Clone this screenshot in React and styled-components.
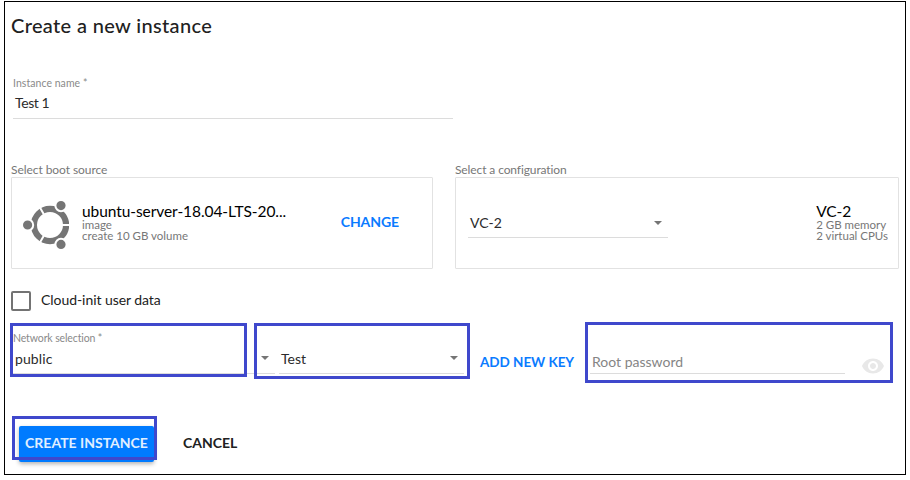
import React from "react";
import styled, { createGlobalStyle } from "styled-components";
import { MdVisibility } from "react-icons/md";

const GlobalStyle = createGlobalStyle`
  * { box-sizing: border-box; }
  body { margin: 0; background: #fff; font-family: Lato, "Liberation Sans", sans-serif; }
`;

const Dialog = styled.main`
  width: 902px;
  height: 474px;
  margin: 1px 0 0 4px;
  padding: 11px 6px 0;
  border: 1px solid #000;
  display: flex;
  flex-direction: column;
  align-items: flex-start;
`;

const Title = styled.h1`
  margin: 0;
  font-size: 20px;
  line-height: 24px;
  font-weight: 500;
  letter-spacing: 0.35px;
  color: #212121;
`;

const Field = styled.div`
  display: flex;
  flex-direction: column;
  justify-content: flex-end;
  width: ${(p) => p.$width}px;
  height: ${(p) => p.$height}px;
  margin-left: ${(p) => p.$gap || 0}px;
  border-bottom: 1px solid #dcdcdc;
`;

const FieldLabel = styled.label`
  font-size: 10.5px;
  line-height: 13px;
  letter-spacing: ${(p) => p.$spacing || 0}px;
  color: #8a8a8a;
`;

const Value = styled.div`
  display: flex;
  align-items: center;
  justify-content: space-between;
  height: 28px;
  padding: ${(p) => p.$drop || 0}px 6px ${(p) => p.$lift || 0}px 2px;
  font-size: 14px;
  letter-spacing: ${(p) => p.$spacing || 0}px;
  color: ${(p) => (p.$muted ? "#858585" : "#2b2b2b")};
`;

const Caret = styled.span`
  width: 0;
  height: 0;
  border: 4px solid transparent;
  border-top-color: #757575;
  border-bottom: 0;
`;

const NameRow = styled.section`
  margin: 39px 0 0 2px;
`;

const Sources = styled.section`
  display: grid;
  grid-template-columns: 422px 444px;
  column-gap: 22px;
  margin-top: 43px;
`;

const Caption = styled.div`
  height: 15px;
  font-size: 12px;
  line-height: 15px;
  letter-spacing: ${(p) => p.$spacing}px;
  color: #777;
`;

const Card = styled.div`
  display: flex;
  align-items: center;
  height: 92px;
  padding: 0 ${(p) => p.$end}px 0 12px;
  border: 1px solid #e2e2e2;
  border-radius: 1px;
`;

const Logo = styled.svg`
  width: 46px;
  height: 50px;
  margin: 4px 13px 0 -1px;
  flex: none;
`;

const Details = styled.div`
  flex: ${(p) => (p.$grow ? 1 : "none")};
  margin-left: ${(p) => (p.$grow ? 0 : "auto")};
  margin-top: -1px;
`;

const DetailName = styled.div`
  font-size: 15.5px;
  line-height: 15px;
  letter-spacing: -0.07px;
  color: #000;
`;

const DetailLine = styled.div`
  font-size: 11.5px;
  line-height: 11px;
  color: #777;
`;

const TextButton = styled.button`
  padding: 0 0 2px;
  border: 0;
  background: none;
  font: 700 ${(p) => p.$size || 14}px/20px Lato, sans-serif;
  letter-spacing: ${(p) => p.$spacing || 0}px;
  color: ${(p) => (p.$dark ? "#212121" : "#0a7bff")};
`;

const CheckRow = styled.label`
  display: flex;
  align-items: center;
  gap: 10px;
  height: 20px;
  margin-top: 22px;
  font-size: 14px;
  line-height: 18px;
  letter-spacing: -0.06px;
  color: #212121;
`;

const CheckText = styled.span`
  padding-bottom: 2px;
`;

const Checkbox = styled.span`
  width: 20px;
  height: 20px;
  border: 2px solid #737373;
  border-radius: 2px;
`;

const AccessRow = styled.section`
  display: flex;
  align-items: flex-end;
  height: 51px;
  margin: 12px 0 0 2px;
`;

const KeyAction = styled.div`
  width: 111px;
  padding: 0 0 0 1px;
  margin-left: 15px;
`;

const Reveal = styled.span`
  display: flex;
  margin: 0 0 -4px 16px;
  color: #e8e8e8;
`;

const Actions = styled.footer`
  display: flex;
  align-items: center;
  gap: 29px;
  margin: 52px 0 0 8px;
`;

const Primary = styled.button`
  width: 135px;
  height: 36px;
  padding: 0 0 2px;
  border: 0;
  border-radius: 2px;
  background: #007bff;
  box-shadow: 0 2px 4px rgba(0, 0, 0, 0.3);
  color: #e0efff;
  font: 700 14px/34px Lato, sans-serif;
`;

const Highlight = styled.div`
  position: absolute;
  left: ${(p) => p.$x}px;
  top: ${(p) => p.$y}px;
  width: ${(p) => p.$w}px;
  height: ${(p) => p.$h}px;
  border: 3px solid #3f48cc;
  pointer-events: none;
`;

const highlights = [
  { $x: 10, $y: 323, $w: 237, $h: 54 },
  { $x: 254, $y: 323, $w: 216, $h: 56 },
  { $x: 585, $y: 322, $w: 308, $h: 61 },
  { $x: 12, $y: 416, $w: 145, $h: 44 },
];

function UbuntuLogo() {
  return (
    <Logo viewBox="0 0 46 50" fill="#757575">
      <circle cx="27" cy="25" r="16.1" fill="none" stroke="#757575" strokeWidth="6.2" />
      <g stroke="#fff" strokeWidth="2">
        <path d="M27 25H48M27 25L16.5 6.8M27 25L16.5 43.2" />
        <circle cx="38" cy="5.6" r="5.6" />
        <circle cx="38" cy="44.4" r="5.6" />
        <circle cx="4.6" cy="25" r="5.6" />
      </g>
    </Logo>
  );
}

export default function App() {
  return (
    <>
      <GlobalStyle />
      <Dialog>
        <Title>Create a new instance</Title>
        <NameRow>
          <Field $width={440} $height={43}>
            <FieldLabel $spacing={0.05}>Instance name *</FieldLabel>
            <Value $spacing={-0.4} $lift={4}>Test 1</Value>
          </Field>
        </NameRow>
        <Sources>
          <div>
            <Caption $spacing={-0.06}>Select boot source</Caption>
            <Card $end={33}>
              <UbuntuLogo />
              <Details $grow>
                <DetailName>ubuntu-server-18.04-LTS-20...</DetailName>
                <DetailLine>image</DetailLine>
                <DetailLine>create 10 GB volume</DetailLine>
              </Details>
              <TextButton $spacing={-0.08}>CHANGE</TextButton>
            </Card>
          </div>
          <div>
            <Caption $spacing={-0.11}>Select a configuration</Caption>
            <Card $end={10}>
              <Field $width={200} $height={29}>
                <Value>VC-2<Caret /></Value>
              </Field>
              <Details>
                <DetailName>VC-2</DetailName>
                <DetailLine>2 GB memory</DetailLine>
                <DetailLine>2 virtual CPUs</DetailLine>
              </Details>
            </Card>
          </div>
        </Sources>
        <CheckRow><Checkbox /><CheckText>Cloud-init user data</CheckText></CheckRow>
        <AccessRow>
          <Field $width={262} $height={43}>
            <FieldLabel $spacing={-0.12}>Network selection *</FieldLabel>
            <Value $spacing={0.1} $lift={2}>public<Caret /></Value>
          </Field>
          <Field $width={185} $height={29} $gap={4}>
            <Value $lift={2}>Test<Caret /></Value>
          </Field>
          <KeyAction><TextButton $size={13.5} $spacing={-0.04}>ADD NEW KEY</TextButton></KeyAction>
          <Field $width={255} $height={29}>
            <Value $muted $drop={4}>Root password</Value>
          </Field>
          <Reveal><MdVisibility size={24} /></Reveal>
        </AccessRow>
        <Actions>
          <Primary>CREATE INSTANCE</Primary>
          <TextButton $dark>CANCEL</TextButton>
        </Actions>
      </Dialog>
      {highlights.map((h) => <Highlight key={h.$x} {...h} />)}
    </>
  );
}
